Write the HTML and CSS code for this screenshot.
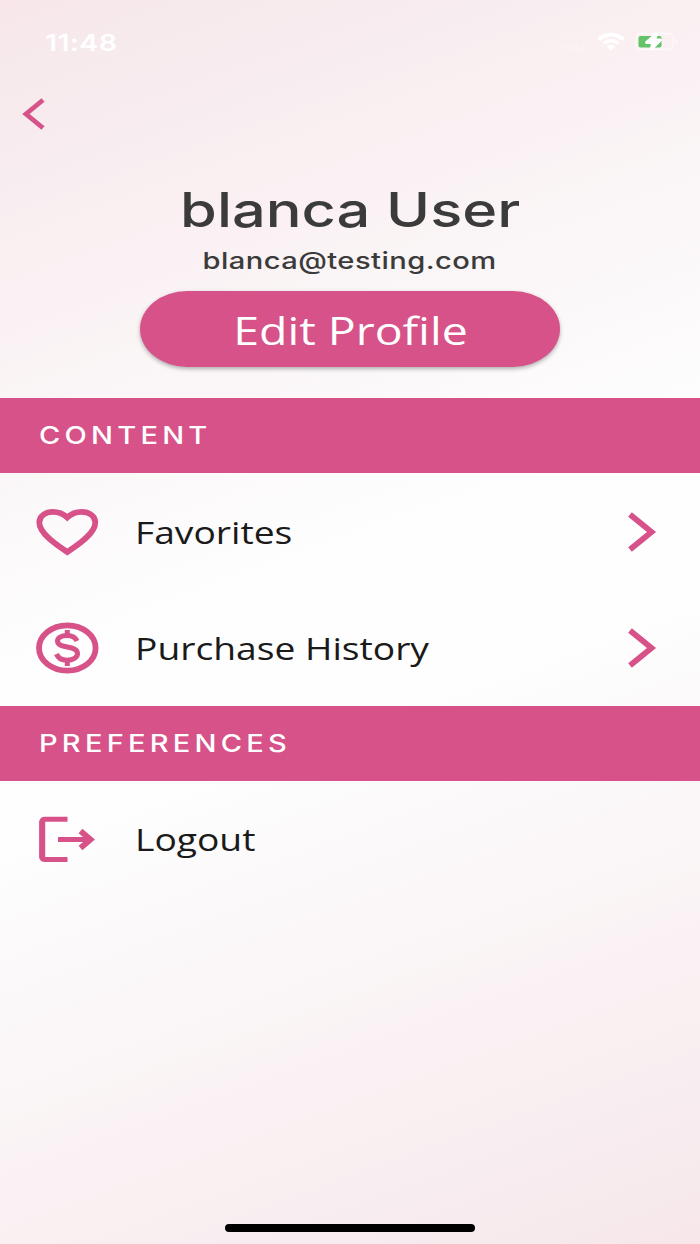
FILE: index.html
```html
<!DOCTYPE html>
<html lang="en">
<head>
  <meta charset="UTF-8">
  <title>Profile</title>
  <link rel="stylesheet" href="styles.css">
</head>
<body>
  <div class="screen">
    <div class="status-bar">
      <span class="time">11:48</span>
      <div class="status-icons">
        <svg class="signal" width="28" height="6" viewBox="0 0 28 6">
          <circle cx="4" cy="3" r="2"/>
          <circle cx="11" cy="3" r="2"/>
          <circle cx="18" cy="3" r="2"/>
          <circle cx="25" cy="3" r="2"/>
        </svg>
        <svg class="wifi" width="28" height="18" viewBox="0 0 28 18">
          <path d="M1.5 6.5Q14 -3.5 26.5 6.5" stroke-width="4"/>
          <path d="M6.5 10.5Q14 4.5 21.5 10.5" stroke-width="3.4"/>
          <path class="dot" d="M9.5 13.5Q14 10 18.5 13.5L14 17.5Z"/>
        </svg>
        <svg class="battery" width="44" height="20" viewBox="0 0 44 20">
          <rect class="case" x="1" y="1.5" width="37" height="16" rx="4"/>
          <rect class="level" x="3.5" y="4" width="23" height="11.5" rx="2"/>
          <path class="cap" d="M40.5 7v5q2.5-1 2.5-2.5T40.5 7z"/>
          <path class="bolt" d="M21.5 2L11.5 10.5h6L16.500 17L25.500 8h-6z"/>
        </svg>
      </div>
    </div>

    <div class="nav">
      <svg class="back" width="24" height="32" viewBox="0 0 24 32">
        <path d="M21 2L4 16L21 30"/>
      </svg>
    </div>

    <div class="profile">
      <div class="name"><span>blanca User</span></div>
      <div class="email"><span>blanca@testing.com</span></div>
      <button class="edit"><span>Edit Profile</span></button>
    </div>

    <div class="section-title"><span>CONTENT</span></div>
    <div class="row">
      <svg class="icon heart" width="64" height="54" viewBox="0 0 64 54">
        <path d="M32.3 47C20 39 4.3 28 4.3 17.5C4.3 11 10.5 6.8 18 6.8C24.5 6.8 28.5 9 32.3 12.5C36 9 40 6.8 46.5 6.8C54 6.8 60.3 11 60.3 17.5C60.3 28 44.5 39 32.3 47Z"/>
      </svg>
      <span class="label">Favorites</span>
      <svg class="arrow" width="30" height="40" viewBox="0 0 30 40">
        <path d="M3 2.5L24.500 20L3 37.5"/>
      </svg>
    </div>
    <div class="row">
      <svg class="icon" width="64" height="54" viewBox="0 0 64 54">
        <ellipse cx="32.3" cy="27" rx="28.300" ry="22.700"/>
        <path class="thin" d="M42 20C40 15.5 36.5 14.5 32 14.5C26 14.5 22.5 17 22.5 20C22.5 28.5 42.5 23.5 42.5 32.5C42.5 36.500 38 39.200 32 39.200C26.500 39.200 23 37 21.500 33"/>
        <path class="bar" d="M32.3 9V14M32.3 39.5V45"/>
      </svg>
      <span class="label">Purchase History</span>
      <svg class="arrow" width="30" height="40" viewBox="0 0 30 40">
        <path d="M3 2.5L24.500 20L3 37.5"/>
      </svg>
    </div>

    <div class="section-title"><span>PREFERENCES</span></div>
    <div class="row">
      <svg class="icon" width="64" height="54" viewBox="0 0 64 54">
        <path class="door-side" d="M7.2 8.5V46.5"/>
        <path class="door" d="M32.500 7.200H10Q7 7.200 7 10V45Q7 47.600 10 47.600H32.500"/>
        <path class="door" d="M23 27.5H54"/>
        <path class="tip" d="M45.5 19L55.500 27.500L45.500 36"/>
      </svg>
      <span class="label">Logout</span>
    </div>

    <div class="home-indicator"></div>
  </div>
</body>
</html>
```
FILE: styles.css
```css
body {
  margin: 0;
  font-family: 'Open Sans', sans-serif;
}

.screen {
  display: flex;
  flex-direction: column;
  box-sizing: border-box;
  width: 700px;
  height: 1244px;
  overflow: hidden;
  background: linear-gradient(160deg, #f8e6ea 0%, #f6eaec 5%, #f7ecf0 12%, #faf0f1 17%, #fbf0f4 21%, #faf4f5 25%, #fbf7f8 32%, #fefefe 45%, #fefefe 57%, #fcfafa 63%, #fbf7f8 70%, #faf4f5 76%, #fbf0f4 80%, #faf0f1 84%, #f7ecf0 90%, #f6eaec 96%, #f8e6ea 100%);
}

/* wide lettering: text is stretched horizontally */
.time,
.name span,
.email span,
.edit span,
.section-title span,
.label {
  display: inline-block;
  white-space: nowrap;
  transform: scaleX(1.24);
}

.status-bar {
  display: flex;
  justify-content: space-between;
  align-items: center;
  height: 84px;
  padding: 0 21px 0 45px;
}

.time {
  padding-top: 1px;
  font-family: Inter, sans-serif;
  font-size: 23px;
  font-weight: 600;
  letter-spacing: 0.3px;
  color: #fff;
  transform-origin: left;
}

.status-icons {
  display: flex;
  align-items: center;
}

.signal {
  margin: 11px 10px 0 0;
  fill: #fff;
  opacity: 0.3;
}

.wifi {
  margin-right: 10px;
  fill: none;
  stroke: #fff;
}

.wifi .dot {
  fill: #fff;
  stroke: none;
}

.battery .case {
  fill: none;
  stroke: #fff;
  stroke-width: 1.5;
  opacity: 0.5;
}

.battery .level {
  fill: #62c466;
}

.battery .cap {
  fill: #fff;
  opacity: 0.5;
}

.battery .bolt {
  fill: #fff;
  stroke: #fff;
  stroke-width: 3;
  stroke-linejoin: round;
}

.nav {
  display: flex;
  align-items: center;
  height: 60px;
  padding-left: 22px;
}

.back,
.arrow,
.icon {
  flex: none;
  fill: none;
  stroke: #d65288;
  stroke-width: 5.8;
}

.back {
  stroke-width: 4.8;
}

.profile {
  display: flex;
  flex-direction: column;
  align-items: center;
  height: 254.4px;
  padding-top: 36px;
  box-sizing: border-box;
  font-family: Inter, sans-serif;
  color: #3b3b3b;
}

.name {
  font-size: 48px;
  font-weight: 500;
  line-height: 60px;
}

.email {
  margin-top: 6px;
  font-size: 23.5px;
  font-weight: 500;
  line-height: 30px;
  letter-spacing: 0.35px;
}

.edit {
  width: 420px;
  height: 76px;
  margin-top: 15px;
  padding: 0;
  border: none;
  border-radius: 47px / 38px;
  background-color: #d65288;
  box-shadow: 0 2px 4px rgba(0, 0, 0, 0.3);
  color: #fff;
  font-family: 'Open Sans', sans-serif;
  font-size: 39px;
}

.edit span {
  transform: scaleX(1.19);
}

.section-title {
  display: flex;
  align-items: center;
  flex: none;
  height: 75px;
  padding-left: 39px;
  background-color: #d65288;
  color: #fff;
  font-family: Inter, sans-serif;
  font-size: 24px;
  font-weight: 500;
  letter-spacing: 3.5px;
}

.section-title span {
  transform: scaleX(1.21);
  transform-origin: left;
}

.row {
  display: flex;
  align-items: center;
  height: 116.4px;
  padding: 0 43px 0 35px;
}

.icon .thin,
.icon .bar,
.icon .door {
  stroke-width: 5;
}

.icon .door-side {
  stroke-width: 6;
}

.label {
  margin-left: 36px;
  color: #1a1a1a;
  font-size: 31px;
  transform: scaleX(1.2);
  transform-origin: left;
}

.arrow {
  margin-left: auto;
}

.home-indicator {
  width: 250px;
  height: 8px;
  margin: auto auto 12px;
  border-radius: 4px;
  background-color: #000;
}
```
